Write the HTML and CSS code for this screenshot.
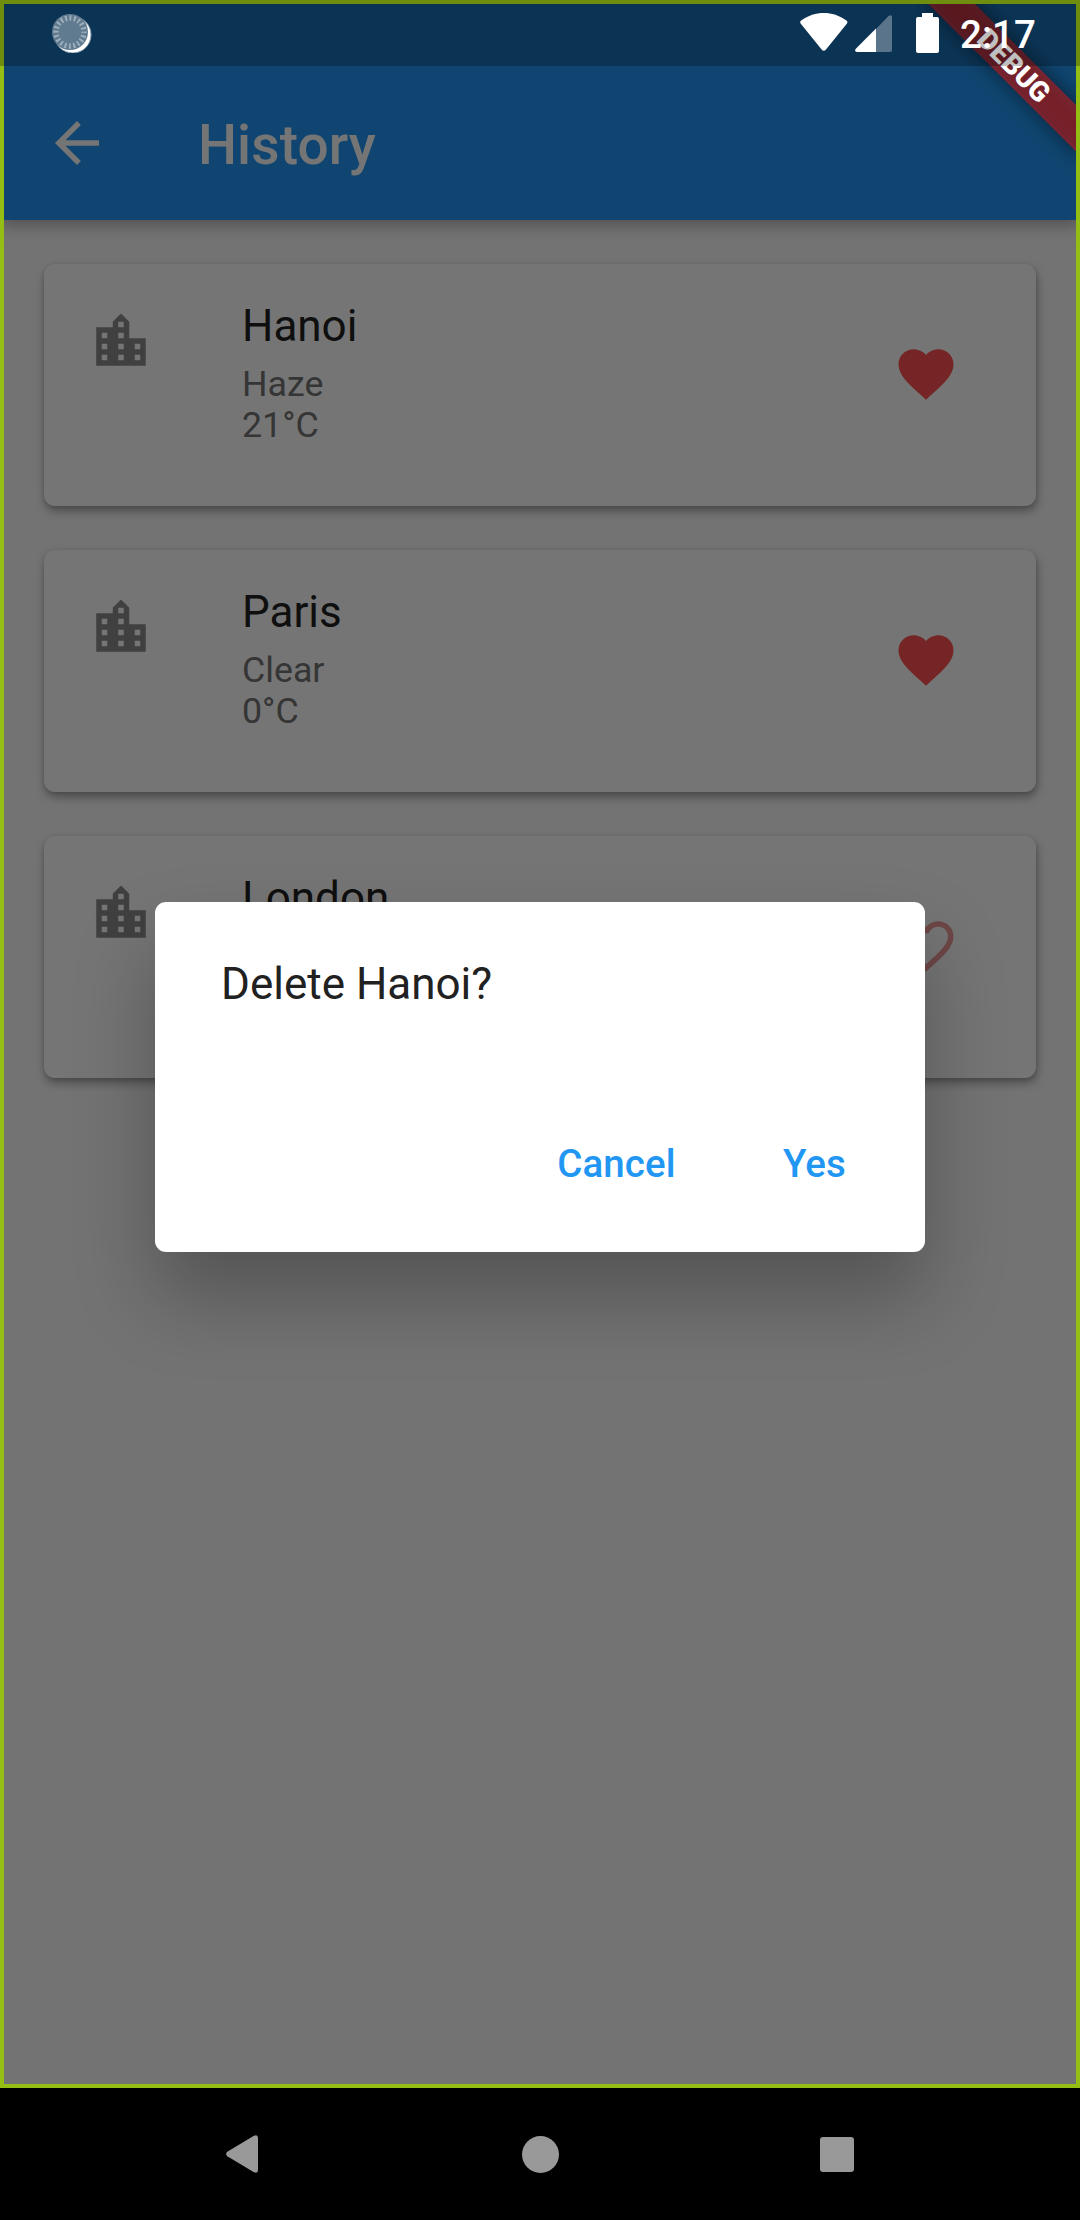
FILE: index.html
```html
<!DOCTYPE html>
<html lang="en">
<head>
<meta charset="utf-8">
<title>History</title>
<link rel="stylesheet" href="styles.css">
</head>
<body>
<svg class="defs" aria-hidden="true">
  <symbol id="city" viewBox="0 0 24 24"><path d="M15 11V5l-3-3-3 3v2H3v14h18V11h-6zm-8 8H5v-2h2v2zm0-4H5v-2h2v2zm0-4H5V9h2v2zm6 8h-2v-2h2v2zm0-4h-2v-2h2v2zm0-4h-2V9h2v2zm0-4h-2V5h2v2zm6 12h-2v-2h2v2zm0-4h-2v-2h2v2z"/></symbol>
  <symbol id="heart" viewBox="0 0 24 24"><path d="M12 21.35l-1.45-1.32C5.4 15.36 2 12.28 2 8.5 2 5.42 4.42 3 7.5 3c1.74 0 3.41.81 4.5 2.09C13.09 3.81 14.76 3 16.5 3 19.58 3 22 5.42 22 8.5c0 3.78-3.4 6.86-8.55 11.54L12 21.35z"/></symbol>
  <symbol id="heart-outline" viewBox="0 0 24 24"><path d="M16.5 3c-1.74 0-3.41.81-4.5 2.09C10.91 3.81 9.24 3 7.5 3 4.42 3 2 5.42 2 8.5c0 3.78 3.4 6.86 8.55 11.54L12 21.35l1.45-1.32C18.6 15.36 22 12.28 22 8.5 22 5.42 19.58 3 16.5 3zm-4.4 15.55l-.1.1-.1-.1C7.14 14.24 4 11.39 4 8.5 4 6.5 5.5 5 7.5 5c1.54 0 3.04.99 3.57 2.36h1.87C13.46 5.99 14.96 5 16.5 5c2 0 3.5 1.5 3.5 3.5 0 2.89-3.14 5.74-7.9 10.05z"/></symbol>
</svg>
<div class="phone">
  <div class="app">
    <header class="app-bar">
      <svg class="icon back" viewBox="0 0 24 24"><path d="M20 11H7.83l5.59-5.59L12 4l-8 8 8 8 1.41-1.41L7.83 13H20v-2z"/></svg>
      <h1 class="title">History</h1>
    </header>
    <main class="list">
      <article class="card">
        <svg class="icon city"><use href="#city"/></svg>
        <div class="info"><h2 class="name">Hanoi</h2><p class="detail">Haze<br>21°C</p></div>
        <div class="fav"><svg class="icon"><use href="#heart"/></svg></div>
      </article>
      <article class="card">
        <svg class="icon city"><use href="#city"/></svg>
        <div class="info"><h2 class="name">Paris</h2><p class="detail">Clear<br>0°C</p></div>
        <div class="fav"><svg class="icon"><use href="#heart"/></svg></div>
      </article>
      <article class="card">
        <svg class="icon city"><use href="#city"/></svg>
        <div class="info"><h2 class="name">London</h2></div>
        <div class="fav off"><svg class="icon"><use href="#heart-outline"/></svg></div>
      </article>
    </main>
    <div class="barrier">
      <section class="dialog" role="dialog">
        <p class="question">Delete Hanoi?</p>
        <div class="actions"><span class="action">Cancel</span><span class="action">Yes</span></div>
      </section>
    </div>
    <div class="banner"><div class="banner-shadow"></div><div class="ribbon">DEBUG</div></div>
    <div class="frame"></div>
    <div class="status-bar">
      <svg class="sync" viewBox="0 0 44 44">
        <circle cx="24.8" cy="25.8" r="18.2" fill="#fff" stroke="#8fa2b2" stroke-width="1"/>
        <circle cx="22" cy="23" r="18" fill="#607b90"/>
        <circle cx="22" cy="23" r="14" fill="none" stroke="#9dafbc" stroke-width="5.4" stroke-dasharray="1.9 2.4982" stroke-dashoffset=".95"/>
      </svg>
      <div class="system">
        <svg class="wifi" viewBox="0 0 48 38"><path fill="#fff" d="M1 11Q-.8 9 1.2 7.600C8 2.400 16 0 23.800 0S39.600 2.400 46.400 7.600Q48.400 9 46.600 11L26 36.500Q23.800 39 21.600 36.500Z"/></svg>
        <svg class="cell" viewBox="0 0 37 37"><path fill="#fff" fill-opacity=".32" d="M21 14L33.500 1Q37 -1 37 2V35Q37 37 35 37H21Z"/><path fill="#fff" d="M21 13.500V37H2Q-1 36.500 .8 33.700Z"/></svg>
        <svg class="battery" viewBox="0 0 23 40"><path fill="#fff" d="M6 4V0H17V4H21Q23 4 23 6V38Q23 40 21 40H2Q0 40 0 38V6Q0 4 2 4Z"/></svg>
        <span class="clock">2:17</span>
      </div>
    </div>
  </div>
  <nav class="nav-bar">
    <svg class="nav-back" viewBox="0 0 32 38"><path fill="#999" d="M1.300 16.800L27.500 1Q32 -1 32 3V35Q32 39 27.500 37L1.300 21.200Q-1.200 19 1.300 16.800Z"/></svg>
    <span class="nav-home"></span>
    <span class="nav-recent"></span>
  </nav>
</div>
</body>
</html>
```
FILE: styles.css
```css
* { box-sizing: border-box; margin: 0; padding: 0; }
body { width: 1080px; height: 2220px; overflow: hidden; background: #000; font-family: Roboto, sans-serif; }
svg { display: block; flex: none; }
.defs { display: none; }
.phone { width: 1080px; height: 2220px; display: flex; flex-direction: column; }
.app { position: relative; height: 2088px; overflow: hidden; background: #fafafa; display: flex; flex-direction: column; }
.icon { width: 66px; height: 66px; fill: currentColor; }

.app-bar { height: 220px; padding: 66px 44px 0; display: flex; align-items: center; background: #2196f3; color: #fff; box-shadow: 0 5px 14px rgba(0,0,0,.3); }
.title { margin: 3px 0 0 88px; font-size: 55px; font-weight: 500; line-height: 64px; letter-spacing: .1px; }

.list { padding: 44px; display: flex; flex-direction: column; gap: 44px; }
.card { height: 242px; display: flex; padding: 44px 44px 0; border-radius: 11px; background: #fff; box-shadow: 1px 5px 10px rgba(0,0,0,.34), 0 1px 4px rgba(0,0,0,.1); }
.city { color: #8c8c8c; }
.info { flex: 1; margin-left: 88px; }
.name { margin-top: -8px; font-size: 44px; font-weight: 400; line-height: 52px; color: #222; }
.detail { margin-top: 12px; font-size: 35.75px; line-height: 41.2px; color: #757575; }
.fav { width: 132px; height: 132px; display: flex; align-items: center; justify-content: center; color: #ff5252; }
.off { color: #ef9a9a; }

.barrier { position: absolute; inset: 0; background: rgba(0,0,0,.54); display: flex; align-items: center; justify-content: center; padding-top: 66px; }
.dialog { width: 770px; height: 349.25px; padding: 56px 66px 0; border-radius: 11px; background: #fff; box-shadow: 0 45px 80px rgba(0,0,0,.27); display: flex; flex-direction: column; }
.question { font-size: 44px; line-height: 52px; color: #212121; }
.actions { margin-top: 131px; display: flex; justify-content: flex-end; gap: 107.3px; padding-right: 13px; }
.action { font-size: 38.5px; font-weight: 500; line-height: 45px; letter-spacing: .1px; color: #2196f3; }

.banner { position: absolute; left: 1080px; top: 0; width: 0; height: 0; transform: rotate(45deg); }
.banner-shadow { position: absolute; left: -110px; top: 77px; width: 220px; height: 33px; background: rgba(0,0,0,.5); filter: blur(10px); }
.ribbon { position: absolute; left: -110px; top: 77px; width: 220px; height: 33px; background: rgba(183,28,28,.627); color: #fff; font-size: 28.05px; font-weight: 900; line-height: 33px; text-align: center; }
.frame { position: absolute; inset: 0; border: 4px solid #95be15; }

.status-bar { position: absolute; left: 0; top: 0; width: 1080px; height: 66px; padding: 0 43px 0 48px; display: flex; justify-content: space-between; background: rgba(0,0,0,.25); color: #fff; }
.sync { width: 44px; height: 44px; margin-top: 9px; }
.system { display: flex; align-items: flex-start; }
.wifi { width: 48px; height: 38px; margin-top: 13px; }
.cell { width: 37px; height: 37px; margin: 15px 0 0 7px; }
.battery { width: 23px; height: 40px; margin: 13px 0 0 24px; }
.clock { margin: 12px 0 0 21px; width: 77px; font-size: 38.5px; font-weight: 500; line-height: 45px; }

.nav-bar { height: 132px; display: flex; align-items: center; padding-left: 226px; }
.nav-back { width: 32px; height: 38px; }
.nav-home { width: 37px; height: 37px; margin-left: 263.5px; border-radius: 50%; background: #999; }
.nav-recent { width: 34px; height: 35px; margin-left: 261.5px; border-radius: 3px; background: #999; }
```
